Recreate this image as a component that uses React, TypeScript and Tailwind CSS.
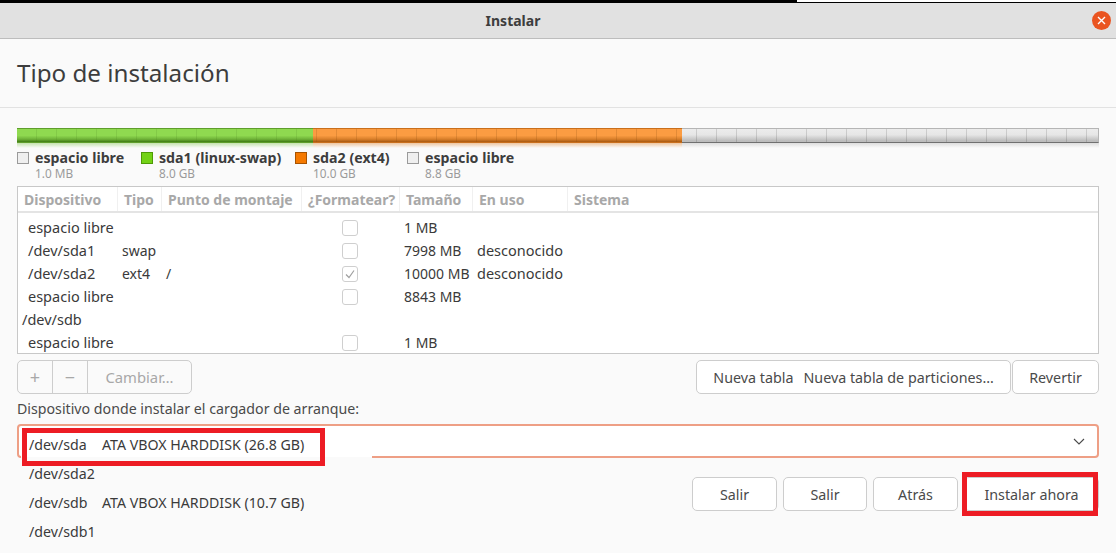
const font = "[font-family:'Noto_Sans',sans-serif]";

const columns = [
  { label: "Dispositivo", w: "w-[100px]" },
  { label: "Tipo", w: "w-[44px]" },
  { label: "Punto de montaje", w: "w-[140px]" },
  { label: "¿Formatear?", w: "w-[98px]" },
  { label: "Tamaño", w: "w-[73px]" },
  { label: "En uso", w: "w-[95px]" },
  { label: "Sistema", w: "flex-1" },
];

const rows = [
  { dev: "espacio libre", tipo: "", mount: "", check: false, box: true, size: "1 MB", use: "", indent: true },
  { dev: "/dev/sda1", tipo: "swap", mount: "", check: false, box: true, size: "7998 MB", use: "desconocido", indent: true },
  { dev: "/dev/sda2", tipo: "ext4", mount: "/", check: true, box: true, size: "10000 MB", use: "desconocido", indent: true },
  { dev: "espacio libre", tipo: "", mount: "", check: false, box: true, size: "8843 MB", use: "", indent: true },
  { dev: "/dev/sdb", tipo: "", mount: "", check: false, box: false, size: "", use: "", indent: false },
  { dev: "espacio libre", tipo: "", mount: "", check: false, box: true, size: "1 MB", use: "", indent: true },
];

function Legend({ swatch, name, size, className }: { swatch: string; name: string; size: string; className: string }) {
  return (
    <div className={`flex gap-[6px] pt-[1px] ${className}`}>
      <span className={`mt-[3px] h-[12px] w-[12px] shrink-0 border ${swatch}`} />
      <div className="flex flex-col">
        <span className="text-[14.2px] leading-[18px] font-bold text-[#3d3d3d] whitespace-nowrap">{name}</span>
        <span className="text-[11.8px] leading-[13px] text-[#9a9a9a]">{size}</span>
      </div>
    </div>
  );
}

function Btn({ children, className = "" }: { children: React.ReactNode; className?: string }) {
  return (
    <div className={`flex h-[34px] items-center justify-center rounded-[5px] border border-[#cdcdcd] bg-white pt-[1px] text-[14.3px] text-[#4a4a4a] whitespace-nowrap ${className}`}>
      {children}
    </div>
  );
}

function Row({ r }: { r: (typeof rows)[number] }) {
  return (
    <div className="flex h-[23px] items-center text-[14px] text-[#3a3a3a] whitespace-nowrap">
      <div className={`w-[100px] text-[14.5px] ${r.indent ? "pl-[10px]" : "pl-[4px]"}`}>{r.dev}</div>
      <div className="w-[44px] pl-[4px]">{r.tipo}</div>
      <div className="w-[140px] pl-[4px]">{r.mount}</div>
      <div className="flex w-[98px] justify-center pr-[2px]">
        {r.box && (
          <span className="flex h-[16px] w-[16px] items-center justify-center rounded-[3px] border border-[#cfcfcf] bg-white">
            {r.check && (
              <svg width="12" height="12" viewBox="0 0 12 12" fill="none">
                <path d="M2 6.5 L5 9.5 L10 2.5" stroke="#a0a0a0" strokeWidth="1.2" />
              </svg>
            )}
          </span>
        )}
      </div>
      <div className="w-[73px] pl-[4px]">{r.size}</div>
      <div className="pl-[4px] text-[14.5px]">{r.use}</div>
    </div>
  );
}

export default function App() {
  return (
    <div className={`relative flex h-[553px] w-[1116px] flex-col overflow-hidden bg-[#fafafa] ${font}`}>
      <div className="flex h-[3px] shrink-0">
        <div className="w-[797px] bg-black" />
        <div className="flex-1 border-b border-black bg-white" />
      </div>
      <div className="relative flex h-[36px] shrink-0 items-center justify-center border-b border-[#bdbdbd] bg-[#e1e1e1] pr-[90px]">
        <span className="text-[14px] font-bold text-[#3d3d3d]">Instalar</span>
        <span className="absolute right-[5px] top-[8px] flex h-[19px] w-[19px] items-center justify-center rounded-full bg-[#ea5420]">
          <svg width="9" height="9" viewBox="0 0 9 9" fill="none">
            <path d="M1 1 L8 8 M8 1 L1 8" stroke="white" strokeWidth="1.4" />
          </svg>
        </span>
      </div>
      <div className="flex h-[69px] shrink-0 items-center border-b border-[#e2e2e2] pl-[17px] pt-[1px]">
        <h1 className="text-[24.2px] font-normal text-[#3d3d3d]">Tipo de instalación</h1>
      </div>

      <div className="flex flex-1 flex-col px-[17px] pt-[20px]">
        <div className="relative flex h-[15px] shrink-0">
          <div className="h-full w-[296px] border-y border-[#5f9e2c] bg-[repeating-linear-gradient(90deg,transparent_0,transparent_19px,rgba(60,110,20,0.14)_19px,rgba(60,110,20,0.14)_20px),linear-gradient(#8fd950,#8fd950_50%,#6fb238_78%,#3f7a14)]" />
          <div className="h-full w-[369px] border-y border-[#c96f1c] bg-[repeating-linear-gradient(90deg,transparent_0,transparent_3px,rgba(130,70,10,0.2)_3px,rgba(130,70,10,0.2)_4px,transparent_4px,transparent_20px),linear-gradient(#fb9c42,#fb9c42_50%,#d87f2a_78%,#a8580f)]" />
          <div className="h-full w-[105px] border-y border-[#b5b5b5] border-b-[#707070] bg-[repeating-linear-gradient(90deg,transparent_0,transparent_14px,rgba(0,0,0,0.13)_14px,rgba(0,0,0,0.13)_15px,transparent_15px,transparent_20px),linear-gradient(#ececec,#e6e6e6_45%,#bdbdbd_90%)]" />
          <div className="h-full flex-1 border border-l-0 border-[#b5b5b5] border-b-[#707070] bg-[repeating-linear-gradient(90deg,transparent_0,transparent_19px,rgba(0,0,0,0.13)_19px,rgba(0,0,0,0.13)_20px),linear-gradient(#ececec,#e6e6e6_45%,#bdbdbd_90%)]" />
        </div>
        <div className="flex h-[5px] shrink-0">
          <div className="w-[296px] bg-[linear-gradient(#c5e3ae,#fafafa)]" />
          <div className="w-[369px] bg-[linear-gradient(#eec6a0,#fafafa)]" />
          <div className="flex-1 bg-[linear-gradient(#dddddd,#fafafa)]" />
        </div>

        <div className="flex h-[38px] shrink-0">
          <Legend swatch="bg-[#efefef] border-[#9a9a9a]" name="espacio libre" size="1.0 MB" className="w-[124px]" />
          <Legend swatch="bg-[#73d216] border-[#4e9a06]" name="sda1 (linux-swap)" size="8.0 GB" className="w-[154px]" />
          <Legend swatch="bg-[#f57900] border-[#a85300]" name="sda2 (ext4)" size="10.0 GB" className="w-[112px]" />
          <Legend swatch="bg-[#efefef] border-[#9a9a9a]" name="espacio libre" size="8.8 GB" className="w-[124px]" />
        </div>

        <div className="h-[168px] shrink-0 border border-[#c8c8c8] bg-white">
          <div className="flex h-[26px] border-b-[2px] border-[#e4e4e4]">
            {columns.map((c, i) => (
              <div
                key={c.label}
                className={`flex items-center pl-[6px] pt-[1px] text-[14px] font-bold text-[#a8a8a8] whitespace-nowrap ${c.w} ${i < columns.length - 1 ? "border-r border-[#f0f0f0]" : ""}`}
              >
                {c.label}
              </div>
            ))}
          </div>
          <div className="pt-[3px]">
            {rows.map((r, i) => (
              <Row key={i} r={r} />
            ))}
          </div>
        </div>

        <div className="mt-[6px] flex shrink-0 justify-between">
          <div className="flex h-[34px] w-[175px] rounded-[5px] border border-[#cdcdcd] bg-[#fafafa] text-[#a8a8a8]">
            <div className="flex w-[35px] items-center justify-center border-r border-[#cdcdcd] text-[18px]">+</div>
            <div className="flex w-[35px] items-center justify-center border-r border-[#cdcdcd] text-[18px]">−</div>
            <div className="flex flex-1 items-center justify-center text-[14.8px]">Cambiar…</div>
          </div>
          <div className="flex gap-[1px]">
            <Btn className="w-[315px] gap-[10px]">
              <span>Nueva tabla</span>
              <span>Nueva tabla de particiones…</span>
            </Btn>
            <Btn className="w-[87px]">Revertir</Btn>
          </div>
        </div>

        <div className="mt-[6px] h-[24px] shrink-0 text-[14.2px] leading-[18px] text-[#4a4a4a]">
          Dispositivo donde instalar el cargador de arranque:
        </div>

        <div className="flex h-[34px] shrink-0 items-center justify-end rounded-[4px] border-[2px] border-[#ee9f85] bg-white pr-[12px]">
          <svg width="12" height="7" viewBox="0 0 12 7" fill="none">
            <path d="M1 1 L6 6 L11 1" stroke="#4a4a4a" strokeWidth="1.1" />
          </svg>
        </div>

        <div className="mt-[19px] flex shrink-0 justify-end gap-[6px]">
          <Btn className="w-[85px]">Salir</Btn>
          <Btn className="w-[84px]">Salir</Btn>
          <Btn className="w-[85px]">Atrás</Btn>
          <Btn className="w-[135px]">Instalar ahora</Btn>
        </div>
      </div>

      <div className="absolute left-[21px] top-[426px] h-[127px] w-[351px] bg-[#fafafa] pl-[8px] pt-[4px] text-[14.2px] text-[#3a3a3a]">
        <div className="absolute left-0 top-0 h-[31px] w-full bg-white" />
        <div className="relative flex h-[29px] items-center"><span className="w-[73px]">/dev/sda</span><span>ATA VBOX HARDDISK (26.8 GB)</span></div>
        <div className="relative flex h-[29px] items-center">/dev/sda2</div>
        <div className="relative flex h-[29px] items-center"><span className="w-[73px]">/dev/sdb</span><span>ATA VBOX HARDDISK (10.7 GB)</span></div>
        <div className="relative flex h-[29px] items-center">/dev/sdb1</div>
      </div>

      <div className="absolute left-[22px] top-[428px] h-[38px] w-[303px] border-[5px] border-[#ed1c24]" />
      <div className="absolute left-[962px] top-[472px] h-[44px] w-[136px] border-[5px] border-[#ed1c24]" />
    </div>
  );
}
